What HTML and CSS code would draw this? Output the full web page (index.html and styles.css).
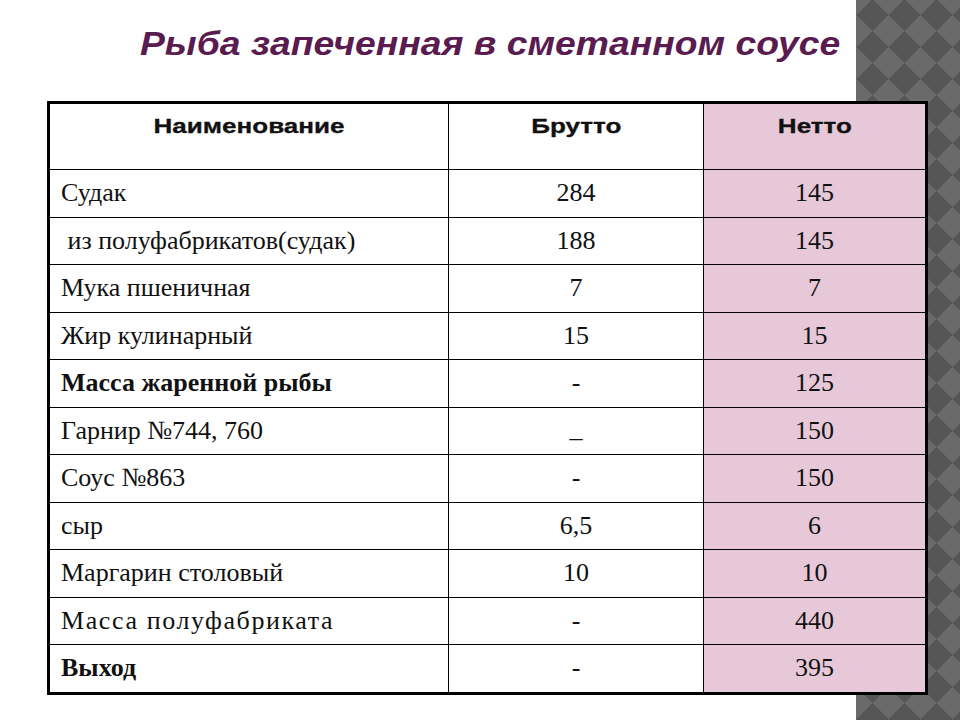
FILE: index.html
```
<!DOCTYPE html>
<html lang="ru">
<head>
<meta charset="utf-8">
<title>Рыба запеченная в сметанном соусе</title>
<link rel="stylesheet" href="styles.css">
</head>
<body>
<div class="page">
  <div class="panel"></div>
  <main class="slide">
    <h1 class="title"><span class="title-text">Рыба запеченная в сметанном соусе</span></h1>
    <table class="recipe">
      <thead>
        <tr>
          <th class="c1"><span class="head">Наименование</span></th>
          <th class="c2"><span class="head">Брутто</span></th>
          <th class="c3"><span class="head">Нетто</span></th>
        </tr>
      </thead>
      <tbody>
        <tr><td class="name">Судак</td><td class="num">284</td><td class="num net">145</td></tr>
        <tr><td class="name">&nbsp;из полуфабрикатов(судак)</td><td class="num">188</td><td class="num net">145</td></tr>
        <tr><td class="name">Мука пшеничная</td><td class="num">7</td><td class="num net">7</td></tr>
        <tr><td class="name">Жир кулинарный</td><td class="num">15</td><td class="num net">15</td></tr>
        <tr><td class="name bold">Масса жаренной рыбы</td><td class="num">-</td><td class="num net">125</td></tr>
        <tr><td class="name">Гарнир №744, 760</td><td class="num"><span class="under">_</span></td><td class="num net">150</td></tr>
        <tr><td class="name">Соус №863</td><td class="num">-</td><td class="num net">150</td></tr>
        <tr><td class="name">сыр</td><td class="num">6,5</td><td class="num net">6</td></tr>
        <tr><td class="name">Маргарин столовый</td><td class="num">10</td><td class="num net">10</td></tr>
        <tr><td class="name spaced">Масса полуфабриката</td><td class="num">-</td><td class="num net">440</td></tr>
        <tr><td class="name bold">Выход</td><td class="num">-</td><td class="num net">395</td></tr>
      </tbody>
    </table>
  </main>
</div>
</body>
</html>
```
FILE: styles.css
```
html, body {
  margin: 0;
  padding: 0;
  background: #ffffff;
}

.page {
  position: relative;
  width: 960px;
  height: 720px;
  overflow: hidden;
}

.panel {
  position: absolute;
  left: 856px;
  top: 0;
  width: 104px;
  height: 720px;
  background-color: #565656;
  background-image:
    linear-gradient(45deg, #6a6a6a 25%, transparent 25%, transparent 75%, #6a6a6a 75%),
    linear-gradient(-45deg, #6a6a6a 25%, transparent 25%, transparent 75%, #6a6a6a 75%);
  background-size: 32px 32px;
  background-position: 0 -1px;
}

.slide {
  position: relative;
  padding-top: 22px;
}

.title {
  margin: 0 0 0 140px;
  font-family: "Liberation Sans", Arial, sans-serif;
  font-weight: bold;
  font-style: italic;
  font-size: 33px;
  line-height: 44px;
  color: #5a1c50;
}

.title-text {
  display: inline-block;
  transform: scaleX(1.13);
  transform-origin: left center;
}

.recipe {
  margin: 35px 0 0 47px;
  width: 881px;
  border-collapse: collapse;
  border: 3px solid #000;
  table-layout: fixed;
}

.recipe th,
.recipe td {
  border: 1px solid #000;
  padding: 0;
}

.recipe th {
  height: 67px;
  vertical-align: top;
  padding-top: 9px;
  box-sizing: border-box;
  font-family: "Liberation Sans", Arial, sans-serif;
  font-weight: bold;
  font-size: 21px;
  line-height: 26px;
  color: #111;
  text-align: center;
}

.head {
  display: inline-block;
  transform: scaleX(1.24);
  -webkit-text-stroke: 0.3px #111;
}

.c1 { width: 400px; }
.c2 { width: 255px; }
.c3 { background: #e7c8d8; }

.recipe td {
  height: 46.5px;
  font-family: "Liberation Serif", "Times New Roman", serif;
  font-size: 26px;
  line-height: 28px;
  color: #111;
  vertical-align: middle;
}

.name {
  text-align: left;
  padding-left: 11px !important;
}

.num {
  text-align: center;
}

.net {
  background: #e7c8d8;
}

.bold {
  font-weight: bold;
}

.spaced {
  letter-spacing: 1.6px;
}

.under {
  position: relative;
  top: -2px;
}
```
